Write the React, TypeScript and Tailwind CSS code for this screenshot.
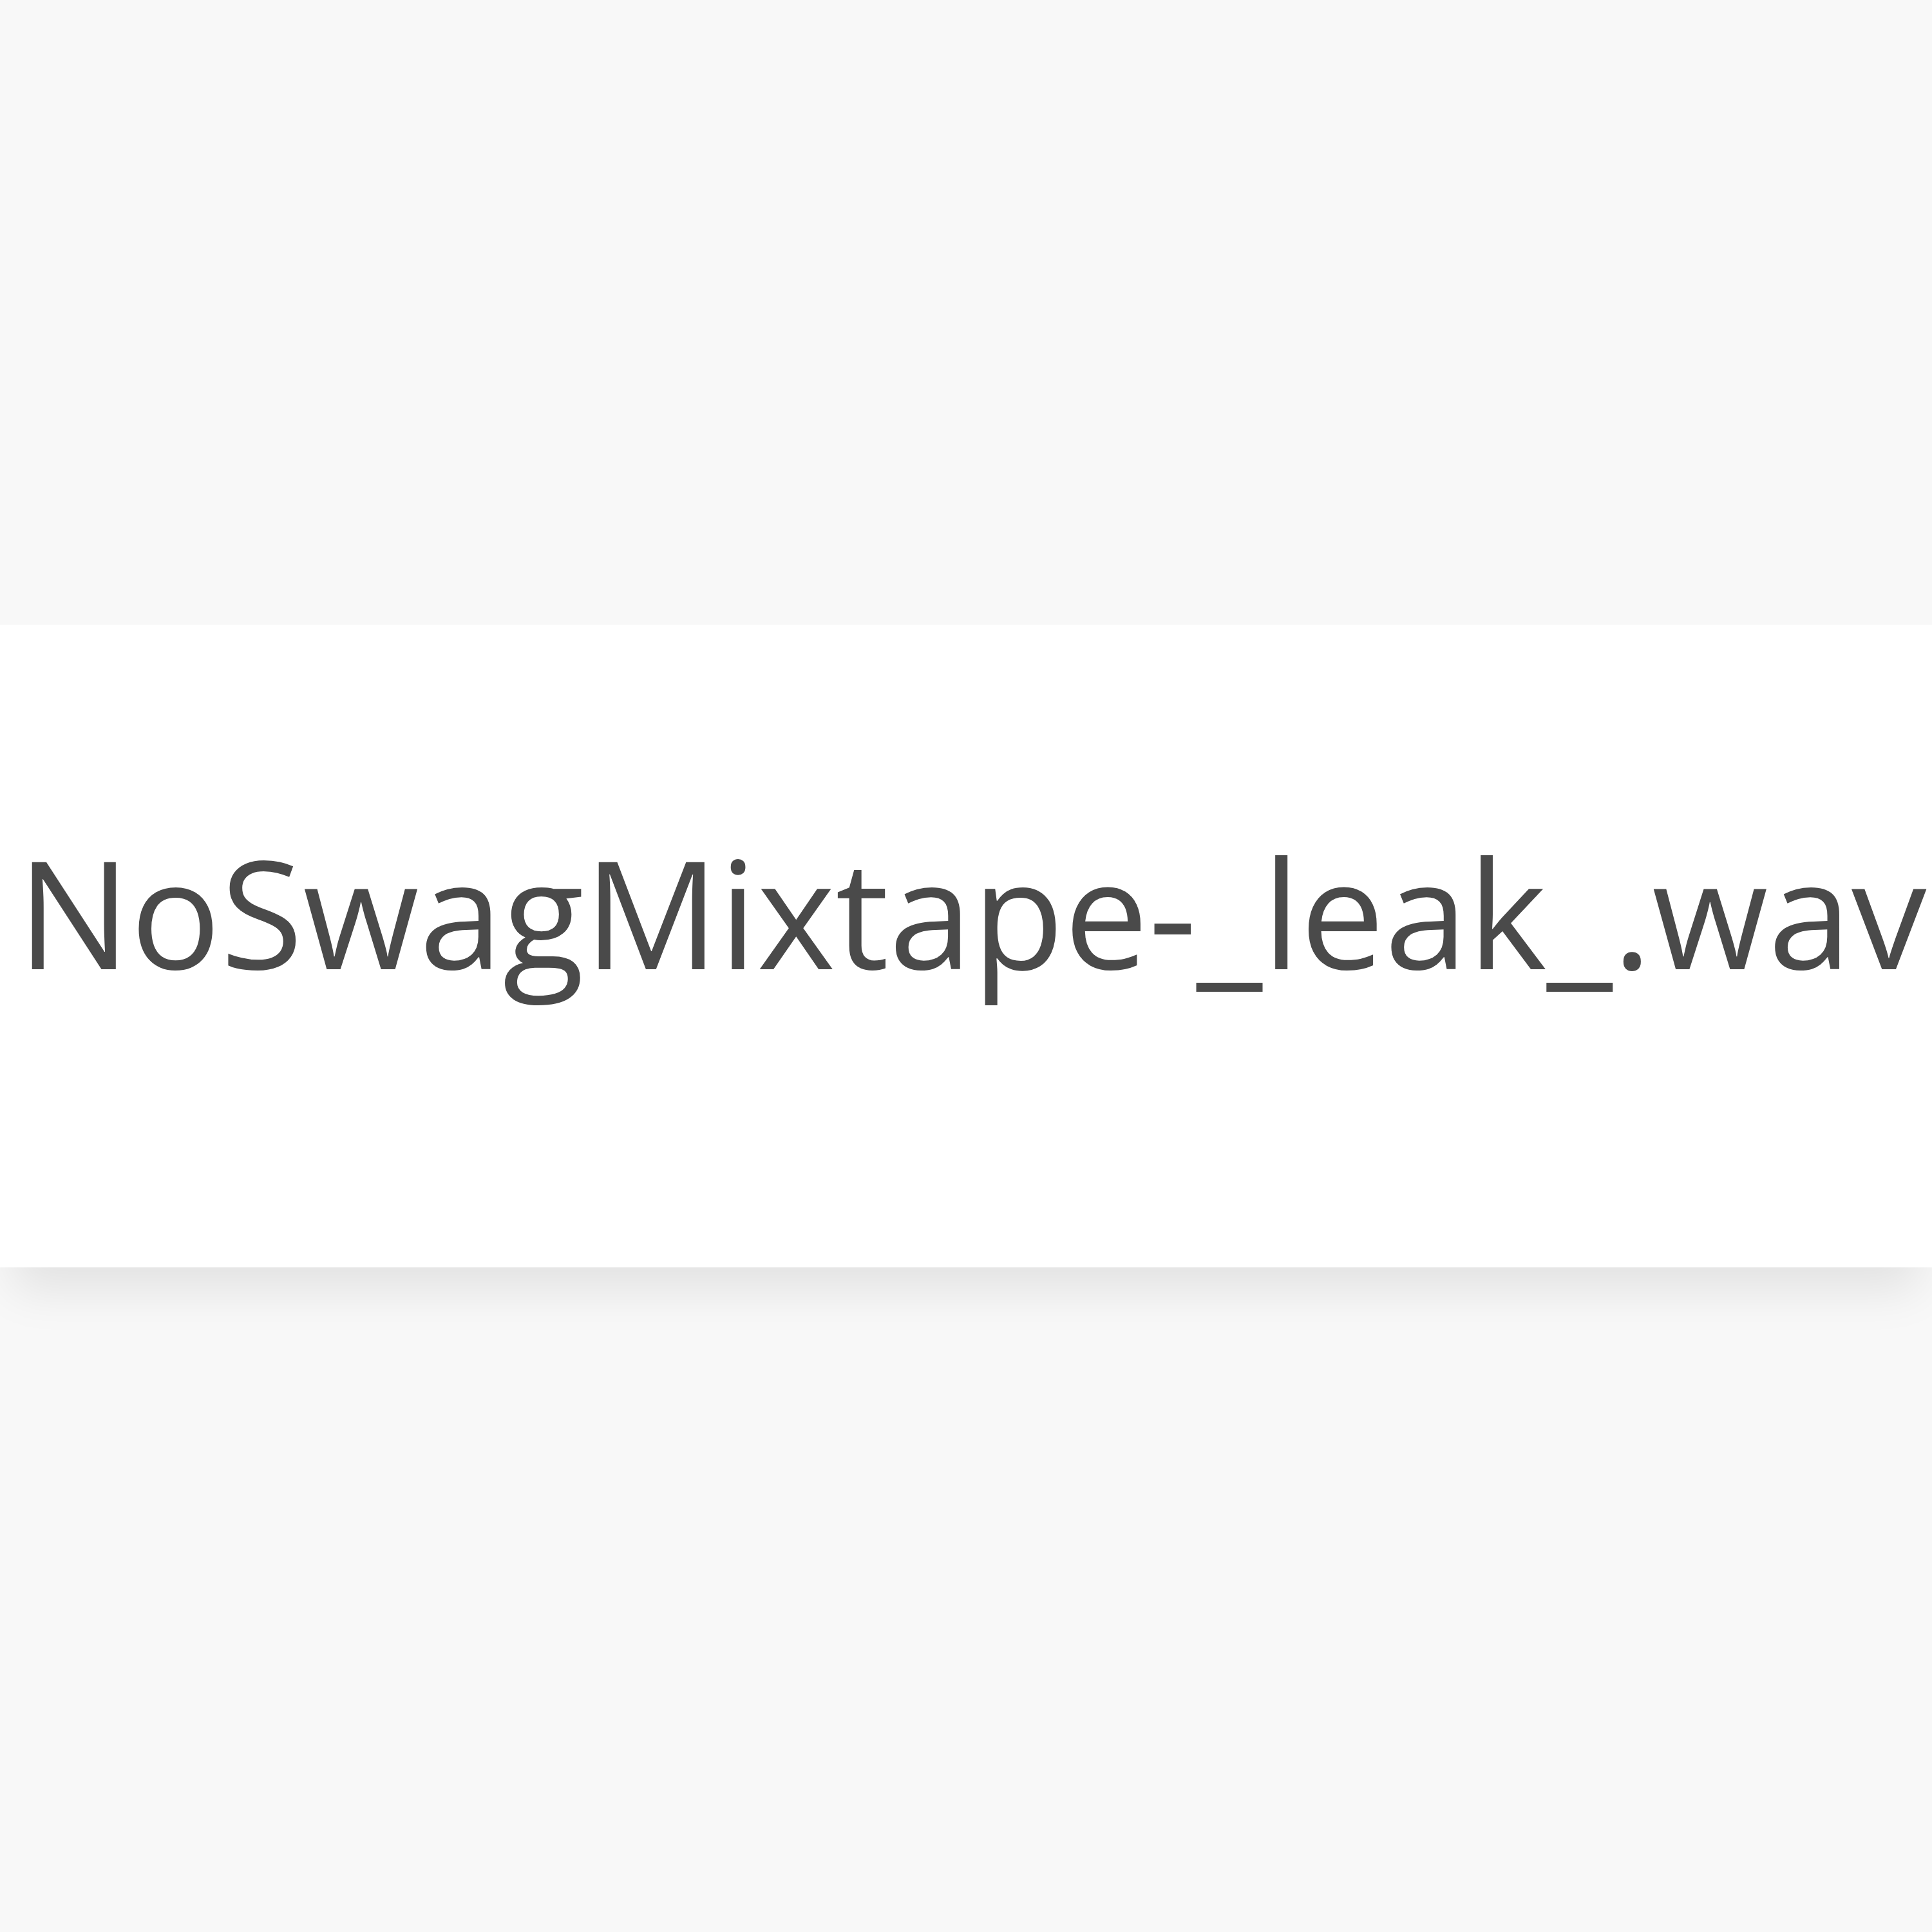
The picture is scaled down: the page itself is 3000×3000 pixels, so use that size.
export default function App() {
  return (
    <div className="h-[3000px] w-[3000px] overflow-hidden bg-[#f8f8f8] pt-[970px]">
      <div className="h-[998px] bg-white pl-[27px] pt-[328px] shadow-[0_55px_70px_-20px_rgba(0,0,0,0.09)]">
        <p
          className="whitespace-nowrap text-[233px] leading-none text-[#4a4a4a]"
          style={{ fontFamily: '"Open Sans", sans-serif' }}
        >
          NoSwagMixtape-_leak_.wav
        </p>
      </div>
    </div>
  );
}
